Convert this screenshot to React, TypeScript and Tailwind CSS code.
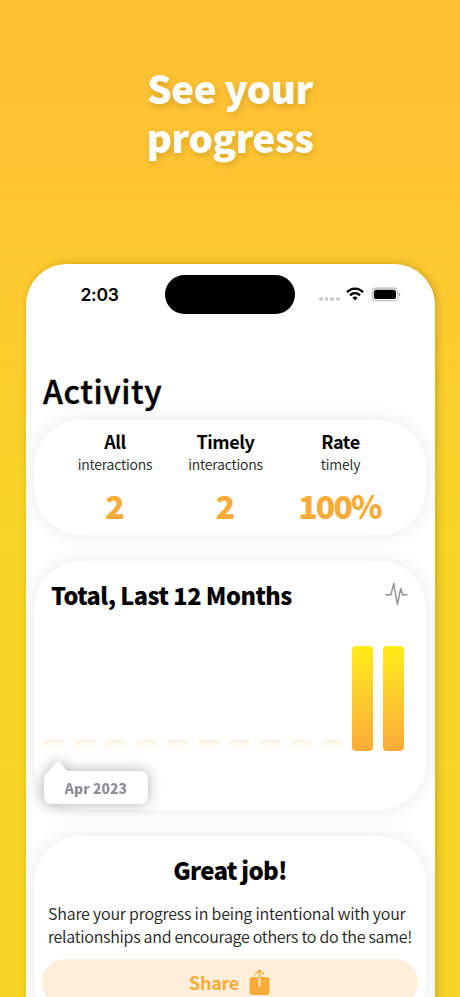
const stats = [
  { title: "All", subtitle: "interactions", value: "2", width: "w-[110px]" },
  { title: "Timely", subtitle: "interactions", value: "2", width: "w-[111px]" },
  { title: "Rate", subtitle: "timely", value: "100%", width: "w-[119px]" },
];

const months = [0, 0, 0, 0, 0, 0, 0, 0, 0, 0, 1, 1];

const card = "rounded-[47px] bg-white shadow-[0_0_20px_rgba(0,0,0,0.09)]";

function StatusBar() {
  return (
    <div className="flex h-[61px] items-center">
      <span className="ml-[54.5px] w-[84.5px] font-['Inter',sans-serif] text-[17.5px] font-semibold leading-none tracking-[-0.3px]">
        2:03
      </span>
      <div className="h-[39px] w-[130px] rounded-full bg-black" />
      <div className="ml-[24px] mt-[9px] flex gap-[2px]">
        {[0, 1, 2, 3].map((dot) => (
          <span key={dot} className="size-[3.7px] rounded-full bg-[#cacacb]" />
        ))}
      </div>
      <svg className="-mt-px ml-[6px]" width="18" height="14" viewBox="0 0 18 14" fill="none" stroke="black" strokeWidth="2.4">
        <path d="M1 5.1C5.6.5 12.4.5 17 5.1" />
        <path d="M4 8.4c2.9-2.8 7.1-2.8 10 0" />
        <path d="M6.4 10.7c1.6-1.5 3.6-1.5 5.2 0L9 13.4Z" fill="black" stroke="none" />
      </svg>
      <svg className="-mt-px ml-[7px]" width="30" height="15" viewBox="0 0 30 15">
        <rect x="1.2" y="1.1" width="25.6" height="12.6" rx="4" fill="white" stroke="#b4b4b8" strokeWidth="1.1" />
        <rect x="2.8" y="2.8" width="22.2" height="9.2" rx="2.6" fill="black" />
        <path d="M28 5.4c1.8.8 1.8 3.2 0 4Z" fill="#a5a5a8" />
      </svg>
    </div>
  );
}

function Stats() {
  return (
    <section className={`flex h-[115px] pl-[26px] pt-[9px] text-center ${card}`}>
      {stats.map((stat, i) => (
        <div key={i} className={`flex flex-col items-center ${stat.width}`}>
          <h2 className="h-[24px] text-[18px] font-bold leading-[24px] tracking-[-0.4px]">{stat.title}</h2>
          <p className="h-[22px] text-[14px] font-[350] leading-[22px] tracking-[-0.2px] text-[#222]">{stat.subtitle}</p>
          <p className="mr-[2px] mt-[9px] text-[32px] font-black leading-[42px] tracking-[-1.9px] text-[#f9ab38]">{stat.value}</p>
        </div>
      ))}
    </section>
  );
}

function Chart() {
  return (
    <section className={`mt-[26px] h-[249px] ${card}`}>
      <div className="flex items-start justify-between pl-[17px] pr-[18px] pt-[17px]">
        <h2 className="text-[23.5px] font-black leading-[34px] tracking-[-0.5px]">Total, Last 12 Months</h2>
        <svg className="mt-[4px]" width="23" height="24" viewBox="0 0 23 24" fill="none" stroke="#8e8e93" strokeWidth="1.4" strokeLinecap="round" strokeLinejoin="round">
          <path d="M1 12.7h5L8.7 1.3 12.4 22.5 15.7 6.6 17.7 12.7h4.3" />
        </svg>
      </div>
      <div className="ml-[10px] mt-[34px] flex h-[105px] w-[360px] items-end justify-between">
        {months.map((count, i) =>
          count ? (
            <div key={i} className="h-[105px] w-[20.7px] rounded-[4px] bg-linear-to-b from-[#ffec14] to-[#f9ab38]" />
          ) : (
            <div key={i} className="mb-[2px] h-[9px] w-[20.7px] bg-linear-to-b from-[#fff3e2] to-white" />
          ),
        )}
      </div>
      <div className="relative ml-[10px] mt-[20px] flex h-[33px] w-[104px] items-center justify-center rounded-[8px] bg-white drop-shadow-[0_0_7px_rgba(0,0,0,0.32)]">
        <svg className="absolute -top-[10px] left-[4px]" width="20" height="11" viewBox="0 0 20 11">
          <path d="M0 11 9.2.6q.8-.8 1.6 0L20 11Z" fill="white" />
        </svg>
        <span className="text-[14px] font-black leading-none text-[#8e8e93]">Apr 2023</span>
      </div>
    </section>
  );
}

function ShareCard() {
  return (
    <section className={`mt-[26px] h-[195px] px-[8px] pt-[17px] ${card}`}>
      <h2 className="text-center text-[24px] font-black leading-[34px] tracking-[-0.75px]">Great job!</h2>
      <p className="ml-[6px] mt-[15px] whitespace-nowrap text-[16px] font-[350] leading-[22.5px] tracking-[-0.2px] text-[#222]">
        Share your progress in being intentional with your
        <br />
        <span className="tracking-[-0.28px]">relationships and encourage others to do the same!</span>
      </p>
      <button className="mt-[12px] flex h-[46px] w-[376px] items-center justify-center gap-[10px] rounded-[23px] bg-[#feeeda] text-[18px] font-bold tracking-[-0.3px] text-[#f9ab38]">
        Share
        <svg className="mr-px" width="21" height="26" viewBox="0 0 21 26" fill="none" strokeLinecap="round" strokeLinejoin="round">
          <rect x="0.5" y="8" width="20" height="18" rx="3" fill="#f9ab38" />
          <path d="M10.5 9v8" stroke="#feeeda" strokeWidth="1.8" />
          <path d="M10.5 8V1.4M6.3 5.3l4.2-4.1 4.2 4.1" stroke="#f9ab38" strokeWidth="1.3" />
        </svg>
      </button>
    </section>
  );
}

export default function App() {
  return (
    <main className="h-[997px] w-[460px] overflow-hidden bg-linear-to-b from-[#ffc233] from-10% to-[#f7d526] to-55% font-['Noto_Sans_CJK_JP',sans-serif] text-black">
      <h1 className="h-[264px] pt-[63px] text-center text-[38.5px] font-black leading-[48.5px] tracking-[-0.5px] text-white [text-shadow:1px_3px_7px_rgba(0,0,0,0.16)]">
        See your
        <br />
        progress
      </h1>
      <div className="ml-[26px] h-[800px] w-[409px] overflow-hidden rounded-t-[41px] bg-white pl-[8px] pr-[9px] shadow-[2px_0_9px_rgba(0,0,0,0.2)]">
        <div className="-ml-[8px] -mr-[9px]">
          <StatusBar />
        </div>
        <h1 className="ml-[9px] mt-[43px] h-[52px] text-[32px] font-medium leading-[45px] tracking-[0.55px] [-webkit-text-stroke:0.4px_black]">Activity</h1>
        <Stats />
        <Chart />
        <ShareCard />
      </div>
    </main>
  );
}
